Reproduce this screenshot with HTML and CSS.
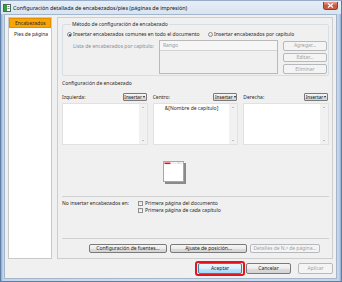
FILE: index.html
```html
<!DOCTYPE html>
<html lang="es">
<head>
<meta charset="utf-8">
<title>Configuración detallada de encabezados/pies</title>
<link rel="stylesheet" href="styles.css">
</head>
<body>
<div class="window">
  <div class="titlebar">
    <svg class="appicon" width="8" height="8" viewBox="0 0 8 8"><rect x="0.5" y="0.5" width="7" height="7" fill="#fff" stroke="#4a6a5a"/><rect x="1" y="1" width="3" height="6" fill="#3c9a3c"/><rect x="4.5" y="2" width="2" height="1" fill="#7a8a9a"/><rect x="4.5" y="4" width="2" height="1" fill="#7a8a9a"/></svg>
    <span class="title">Configuración detallada de encabezados/pies (páginas de impresión)</span>
    <span class="close"><svg width="7" height="5" viewBox="0 0 7 5"><path d="M1 0.5 L6 4.5 M6 0.5 L1 4.5" stroke="#fff" stroke-width="1.3"/></svg></span>
  </div>
  <div class="client">
    <div class="body">
      <ul class="nav">
        <li class="nav-item sel">Encabezados</li>
        <li class="nav-item">Pies de página</li>
      </ul>
      <div class="panel">
        <fieldset class="group">
          <legend class="legend">Método de configuración de encabezado</legend>
          <div class="radios">
            <span class="radio first"><span class="rb on"></span>Insertar encabezados comunes en todo el documento</span>
            <span class="radio"><span class="rb"></span>Insertar encabezados por capítulo</span>
          </div>
          <div class="listrow">
            <span class="listlabel">Lista de encabezados por capítulo:</span>
            <div class="listbox"><div class="listhead">Rango</div></div>
            <div class="listbtns">
              <span class="btn dis">Agregar...</span>
              <span class="btn dis">Editar...</span>
              <span class="btn dis">Eliminar</span>
            </div>
          </div>
        </fieldset>
        <div class="section-title">Configuración de encabezado</div>
        <div class="cols">
          <div class="col">
            <div class="colhead"><span>Izquierda:</span><span class="btn ins">Insertar<span class="caret"></span></span></div>
            <div class="ta"><div class="tatext"></div><div class="sb"><span class="up"></span><span class="down"></span></div></div>
          </div>
          <div class="col">
            <div class="colhead"><span>Centro:</span><span class="btn ins">Insertar<span class="caret"></span></span></div>
            <div class="ta"><div class="tatext center">&amp;[Nombre de capítulo]</div><div class="sb"><span class="up"></span><span class="down"></span></div></div>
          </div>
          <div class="col">
            <div class="colhead"><span>Derecha:</span><span class="btn ins">Insertar<span class="caret"></span></span></div>
            <div class="ta"><div class="tatext right"></div><div class="sb"><span class="up"></span><span class="down"></span></div></div>
          </div>
        </div>
        <div class="preview">
          <svg width="23" height="23" viewBox="0 0 23 23"><rect x="2" y="2" width="21" height="21" fill="#8a8a8a"/><rect x="0.5" y="0.5" width="20" height="20" fill="#fff" stroke="#a8a8a8"/><rect x="1.5" y="1.5" width="6" height="1.6" fill="#e8141b"/><rect x="8.5" y="1.5" width="5" height="1.6" fill="#ececec"/><rect x="14.5" y="1.5" width="5" height="1.6" fill="#e6e6e6"/><rect x="14.7" y="1" width="0.8" height="2" fill="#c8c8c8"/></svg>
        </div>
        <div class="sep"></div>
        <div class="noinsert">
          <span class="nolabel">No insertar encabezados en:</span>
          <div class="checks">
            <span class="check"><span class="cb"></span>Primera página del documento</span>
            <span class="check"><span class="cb"></span>Primera página de cada capítulo</span>
          </div>
        </div>
        <div class="sep sep2"></div>
        <div class="btnrow">
          <span class="btn b-fuentes">Configuración de fuentes...</span>
          <span class="btn b-pos">Ajuste de posición...</span>
          <span class="btn dis b-det">Detalles de N.º de página...</span>
        </div>
      </div>
    </div>
    <div class="footer">
      <span class="highlight"><span class="btn def">Aceptar</span></span>
      <span class="btn b-cancel">Cancelar</span>
      <span class="btn dis b-apply">Aplicar</span>
    </div>
  </div>
</div>
</body>
</html>
```
FILE: styles.css
```css
* { box-sizing: border-box; margin: 0; padding: 0; }
html, body { width: 342px; height: 282px; overflow: hidden; }
body {
  font-family: "Noto Sans", "Open Sans", sans-serif;
  font-size: 5px;
  line-height: 7px;
  color: #2a2a2a;
  background: #fff;
}
.window {
  width: 342px;
  height: 282px;
  display: flex;
  flex-direction: column;
  background: linear-gradient(90deg, #8fa9c9 0, #c4d5ea 2px, #d3e0ef 50%, #c4d5ea calc(100% - 2px), #8fa9c9 100%);
  border: 1px solid #5d7ea6;
  border-top-color: #97acc6;
  padding: 0 4px 2px 3px;
}
.titlebar {
  height: 13px;
  flex: 0 0 13px;
  display: flex;
  align-items: center;
  padding-left: 2px;
  background: linear-gradient(#e6edf6, #d9e4f1);
  margin: 0 -4px 0 -3px;
  padding-right: 3px;
}
.appicon { flex: 0 0 auto; margin-right: 2px; margin-top: 1px; }
.title { font-size: 5.4px; color: #111; margin-top: 1px; }
.close {
  margin-left: auto;
  width: 15px;
  height: 8px;
  margin-top: -3px;
  border-radius: 0 0 3px 3px;
  background: linear-gradient(#e9a391, #c7543c 55%, #d0634a);
  border: 1px solid #8d3d2d;
  border-top: none;
  display: flex;
  align-items: center;
  justify-content: center;
}
.client {
  flex: 1;
  background: #f0f0f0;
  border: 1px solid #a3b6cc;
  padding: 2px 3px 0 3px;
  display: flex;
  flex-direction: column;
}
.body {
  display: flex;
  height: 242px;
  flex: 0 0 242px;
  gap: 5px;
}
.nav {
  list-style: none;
  width: 44px;
  background: #fff;
  border: 1px solid #c9c9c9;
}
.nav-item {
  height: 10px;
  line-height: 9px;
  padding-left: 5px;
  margin-bottom: 2px;
}
.nav-item.sel {
  background: #f9a400;
  border: 1px solid #e48f00;
}
.panel {
  flex: 1;
  border: 1px solid #cdcdcd;
  padding: 3px 3px 0 4px;
  display: flex;
  flex-direction: column;
}
.group {
  border: 1px solid #d5dfe5;
  border-radius: 2px;
  padding: 0 1px 1px 4px;
  min-width: 0;
}
.legend {
  margin-left: 4px;
  padding: 0 1px;
  line-height: 7px;
}
.radios { display: flex; margin-top: 3px; height: 7px; }
.radio { display: flex; align-items: center; white-space: nowrap; }
.radio.first { width: 141px; }
.rb {
  width: 5px; height: 5px;
  border-radius: 50%;
  border: 1px solid #8b8b8b;
  background: linear-gradient(#fdfdfd, #dedede);
  margin-right: 1px;
  display: inline-flex;
  align-items: center;
  justify-content: center;
}
.rb.on::after {
  content: "";
  width: 2px; height: 2px;
  border-radius: 50%;
  background: #1d3b62;
}
.listrow { display: flex; margin-top: 2px; height: 34px; }
.listlabel {
  margin-left: 6px;
  width: 86px;
  flex: 0 0 86px;
  margin-top: 3px;
  color: #8d8d8d;
  white-space: nowrap;
}
.listbox {
  width: 119px;
  flex: 0 0 119px;
  height: 34px;
  border: 1px solid #b9b9b9;
  background: #f0f0f0;
}
.listhead {
  height: 10px;
  line-height: 9px;
  padding-left: 3px;
  border-bottom: 1px solid #d3d3d3;
  color: #9a9a9a;
  background: #f6f6f6;
}
.listbtns {
  margin-left: 5px;
  width: 44px;
  display: flex;
  flex-direction: column;
  gap: 2px;
  margin-top: 1px;
}
.btn {
  display: flex;
  align-items: center;
  justify-content: center;
  height: 10px;
  border: 1px solid #7a7a7a;
  border-radius: 2px;
  background: linear-gradient(#f6f6f6, #ebebeb 50%, #dddddd 51%, #d3d3d3);
  color: #1c1c1c;
  white-space: nowrap;
  line-height: 7px;
}
.btn.dis {
  border-color: #b5b9bc;
  background: #f4f4f4;
  color: #a3a3a3;
}
.section-title { margin-top: 4px; height: 7px; }
.cols {
  display: grid;
  grid-template-columns: 1fr 1fr 1fr;
  column-gap: 5px;
  margin-top: 6px;
}
.colhead {
  display: flex;
  justify-content: space-between;
  align-items: center;
  height: 8px;
}
.btn.ins {
  width: 24px;
  height: 8px;
  margin-right: 1px;
  font-size: 4.7px;
  gap: 1px;
  border-radius: 1px;
}
.caret {
  width: 0; height: 0;
  border-left: 1.5px solid transparent;
  border-right: 1.5px solid transparent;
  border-top: 2px solid #222;
}
.ta {
  margin-top: 2px;
  height: 42px;
  display: flex;
  background: #fff;
  border: 1px solid #e1e1e1;
}
.tatext { flex: 1; padding: 1px 2px; white-space: nowrap; }
.tatext.center { text-align: center; }
.tatext.right { text-align: right; }
.sb {
  width: 8px;
  background: #f1f1f1;
  display: flex;
  flex-direction: column;
  justify-content: space-between;
  align-items: center;
  padding: 3px 0;
}
.up, .down { width: 0; height: 0; border-left: 1.5px solid transparent; border-right: 1.5px solid transparent; }
.up { border-bottom: 1.5px solid #8a8a8a; }
.down { border-top: 1.5px solid #8a8a8a; }
.preview { margin-top: 16px; margin-left: 101px; height: 23px; }
.preview svg { display: block; }
.sep { height: 1px; background: #d0d0d0; margin-top: 12px; }
.noinsert { display: flex; margin-top: 3px; }
.nolabel { width: 76px; flex: 0 0 76px; height: 7px; }
.checks { display: flex; flex-direction: column; }
.check { display: flex; align-items: center; height: 7px; }
.cb {
  width: 5px; height: 5px;
  border: 1px solid #8f8f8f;
  background: linear-gradient(#e6e6e6, #fafafa);
  margin-right: 2px;
}
.sep2 { margin-top: 24px; }
.btnrow {
  display: flex;
  justify-content: flex-end;
  gap: 3px;
  margin-top: 5px;
  padding-right: 9px;
}
.btnrow .btn { height: 9px; }
.b-fuentes { width: 78px; }
.b-pos { width: 77px; }
.b-det { width: 70px; }
.footer {
  display: flex;
  justify-content: flex-end;
  align-items: flex-start;
  padding-top: 2px;
}
.footer .btn { height: 11px; }
.highlight {
  display: block;
  border: 2px solid #e3141b;
  border-radius: 3px;
  padding: 0 1px;
  margin-right: 1px;
}
.btn.def {
  width: 44px;
  border-color: #3c7fb1;
  background: linear-gradient(#eaf6fd, #d9f0fc 50%, #bee6fd 51%, #a7d9f5);
}
.b-cancel { width: 45px; margin-top: 2px; margin-right: 7px; }
.b-apply { width: 35px; margin-top: 2px; }
```
